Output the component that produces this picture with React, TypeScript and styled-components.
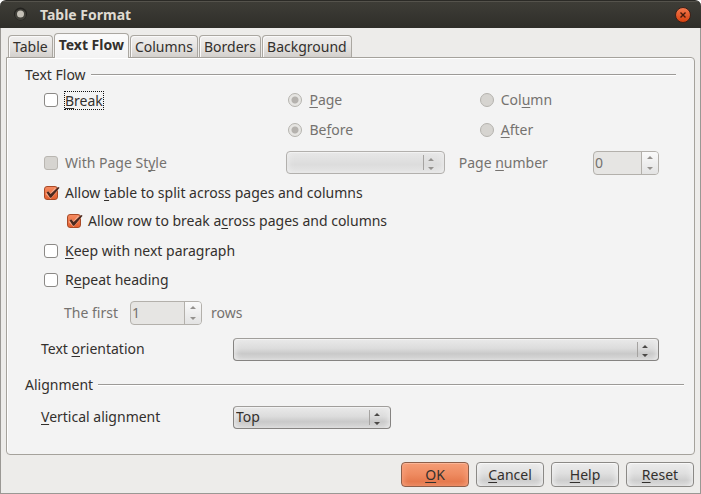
import React, { useState } from "react";
import styled, { createGlobalStyle, css } from "styled-components";

const ink = "#33302d";
const muted = "#75726f";

const GlobalStyle = createGlobalStyle`
  *, *::before, *::after { box-sizing: border-box; }
  body { margin: 0; background: #fff; }
  body, button, input, select {
    font-family: "Noto Sans", "Open Sans", sans-serif;
    font-size: 14px;
    line-height: 20px;
    color: ${ink};
  }
`;

const Window = styled.main`
  display: flex;
  flex-direction: column;
  min-height: 100vh;
`;

const TitleBar = styled.header`
  display: flex;
  align-items: center;
  height: 28px;
  padding: 0 10px 0 13px;
  border-radius: 6px 6px 0 0;
  border-top: 1px solid #2b2a26;
  background: linear-gradient(#55534c 0, #55534c 1px, #3e3d37 1px, #2f2e29 100%);
`;

const Title = styled.h1`
  flex: 1;
  margin: 0 0 0 12px;
  font-size: 14px;
  line-height: 20px;
  font-weight: 700;
  color: #dfdbd2;
`;

const CloseButton = styled.button`
  display: flex;
  padding: 0;
  border: 0;
  background: none;
`;

const Body = styled.div`
  flex: 1;
  display: flex;
  flex-direction: column;
  padding: 5px 5px 6px;
  border: 1px solid #9a9894;
  border-top: 0;
  background: #edecea;
`;

const TabList = styled.div`
  display: flex;
  align-items: flex-end;
  gap: 1px;
  padding-left: 2px;
`;

const Tab = styled.button`
  height: 22px;
  padding: 0 4px;
  border: 1px solid #aaa7a1;
  border-bottom: 0;
  border-radius: 4px 4px 0 0;
  background: linear-gradient(#f0efee, #e6e4e2 50%, #d3d0cc);
  box-shadow: inset 1px 1px 0 #faf9f9;
  white-space: nowrap;

  &[aria-selected="true"] {
    height: 25px;
    margin: 0 0 -1px;
    padding-bottom: 2px;
    background: linear-gradient(#fbfbfb, #f3f3f3);
    font-weight: 700;
    z-index: 1;
  }
`;

const Panel = styled.section`
  flex: 1;
  padding: 7px 18px 20px;
  border: 1px solid #a5a29c;
  border-radius: 0 4px 4px 4px;
  background: #f3f3f3;
  box-shadow: inset 1px 1px 0 #fff;
`;

const Group = styled.fieldset`
  min-width: 0;
  margin: 0;
  padding: 0;
  border: 0;
`;

const GroupTitle = styled.legend<{ $wide?: boolean }>`
  display: flex;
  align-items: center;
  gap: 5px;
  width: 100%;
  height: 20px;
  padding: 0;
  ${(p) => p.$wide && css`
    width: calc(100% + 8px);
    height: 38px;
  `}

  &::after {
    content: "";
    flex: 1;
    height: 2px;
    background: linear-gradient(#9c9a97 50%, #fff 50%);
  }
`;

const Row = styled.div<{ $height: number; $indent?: number }>`
  display: flex;
  align-items: center;
  height: ${(p) => p.$height}px;
  padding: 0 17px 0 ${(p) => p.$indent ?? 19}px;
`;

const ChoiceRow = styled(Row)`
  display: grid;
  grid-template-columns: 244fr 191fr 179fr;
`;

const StyleRow = styled(Row)`
  display: grid;
  grid-template-columns: 242fr 158fr 148fr 66px;
`;

const Choice = styled.label<{ $disabled?: boolean }>`
  display: flex;
  align-items: center;
  gap: 7px;
  white-space: nowrap;
  color: ${(p) => (p.$disabled ? muted : ink)};
`;

const Caption = styled.label<{ $disabled?: boolean }>`
  white-space: nowrap;
  color: ${(p) => (p.$disabled ? muted : ink)};
`;

const FieldCaption = styled(Caption)`
  width: 192px;
`;

const NumberCaption = styled(Caption)`
  padding-left: 14px;
`;

const FirstCaption = styled(Caption)`
  width: 66px;
`;

const LastCaption = styled.span`
  margin-left: 9px;
  color: ${muted};
`;

const Key = styled.u`
  text-decoration-thickness: 1px;
  text-underline-offset: 2px;
  text-decoration-skip-ink: none;
`;

const Focused = styled.span`
  outline: 1px dotted #111;
  line-height: 17px;
`;

const CheckFrame = styled.span`
  display: grid;
  width: 14px;
  height: 14px;

  > * { grid-area: 1 / 1; }
  > svg { overflow: visible; pointer-events: none; }
`;

const CheckInput = styled.input`
  appearance: none;
  width: 14px;
  height: 14px;
  margin: 0;
  border: 1px solid #8b8986;
  border-radius: 3px;
  background: #fff;

  &:checked {
    border-color: #a84a27;
    background: linear-gradient(#f58a60, #e4602f);
  }
  &:disabled {
    border-color: #b9b6b1;
    background: #d6d4d0;
  }
`;

const RadioInput = styled.input`
  appearance: none;
  width: 14px;
  height: 14px;
  margin: 0;
  border: 1px solid #b5b3ae;
  border-radius: 50%;
  background: #d6d4d0;

  &:checked {
    background: radial-gradient(circle, #b5b2ae 0 3px, #e6e5e2 4px);
  }
`;

const SelectFrame = styled.span<{ $fill?: boolean }>`
  position: relative;
  display: flex;
  ${(p) => (p.$fill ? "flex: 1;" : "width: 158px;")}

  > svg {
    position: absolute;
    right: 8px;
    top: 4px;
    pointer-events: none;
  }
`;

const SelectInput = styled.select`
  appearance: none;
  width: 100%;
  height: 23px;
  padding: 0 24px 1px 2px;
  border: 1px solid #858381;
  border-top-color: #a09e9b;
  border-radius: 4px;
  background: linear-gradient(#eaeaea, #dcdcdc 45%, #c9c9c9 70%, #dadada);
  box-shadow: inset 0 1px 0 #f2f2f2, inset 5px 0 6px -4px #eee, inset -5px 0 6px -4px #eee;

  &:disabled {
    opacity: 1;
    border-color: #b2b0ad;
    background: linear-gradient(#e8e8e8, #dcdcdc 60%, #e6e6e6);
  }
`;

const SpinFrame = styled.span<{ $wide?: boolean }>`
  display: flex;
  width: ${(p) => (p.$wide ? 72 : 66)}px;
  height: 24px;
  border: 1px solid #b3b0ab;
  border-radius: 4px;
  background: #e6e5e3;
`;

const SpinInput = styled.input`
  appearance: textfield;
  flex: 1;
  min-width: 0;
  padding: 0 1px;
  border: 0;
  background: none;
  color: ${muted};

  &::-webkit-inner-spin-button { appearance: none; }
`;

const SpinButtons = styled.span`
  display: flex;
  flex-direction: column;
  width: 17px;
  border-left: 1px solid #b3b0ab;
  border-radius: 0 3px 3px 0;
  background: linear-gradient(#fafafa, #e3e3e3);
`;

const SpinButton = styled.button`
  display: flex;
  flex: 1;
  align-items: center;
  justify-content: center;
  padding: 0;
  border: 0;
  background: none;
`;

const Footer = styled.footer`
  display: flex;
  justify-content: flex-end;
  gap: 7px;
  margin-top: 7px;
  padding-right: 1px;
`;

const PushButton = styled.button<{ $primary?: boolean }>`
  width: 68px;
  height: 25px;
  padding: 0;
  border: 1px solid #8b8986;
  border-radius: 4px;
  background: linear-gradient(#ececec, #dfdfdf 45%, #cecece 75%, #dcdcdc);
  box-shadow: inset 0 1px 0 #f8f8f8, inset 5px 0 6px -4px #f4f4f4, inset -5px 0 6px -4px #f4f4f4;
  ${(p) => p.$primary && css`
    border-color: #8d5f4a;
    background: linear-gradient(#f59d76, #ee8a60 50%, #e67a4e 80%, #ea8760);
    box-shadow: inset 0 1px 0 #fbb596, inset 5px 0 6px -4px #f9a582, inset -5px 0 6px -4px #f9a582;
  `}
`;

/** Caption text in which the character after "_" is the underlined shortcut key. */
function Mnemonic({ text }: { text: string }) {
  const at = text.indexOf("_");
  if (at < 0) return <>{text}</>;
  return (
    <span>
      {text.slice(0, at)}
      <Key>{text[at + 1]}</Key>
      {text.slice(at + 2)}
    </span>
  );
}

interface CheckProps {
  text: string;
  initial?: boolean;
  disabled?: boolean;
  focused?: boolean;
}

function Check({ text, initial = false, disabled, focused }: CheckProps) {
  const [on, setOn] = useState(initial);
  const caption = <Mnemonic text={text} />;
  return (
    <Choice $disabled={disabled}>
      <CheckFrame>
        <CheckInput type="checkbox" checked={on} disabled={disabled} onChange={() => setOn(!on)} />
        {on && (
          <svg width="14" height="14" viewBox="0 0 14 14" fill="none" aria-hidden="true">
            <path d="M3 6.5 6.5 10 12.5 3" stroke="#f7a98a" strokeWidth="4" />
            <path d="M2.6 6.4 4.3 5.2 6.6 8 14.2.9 15.6 1.8 7.2 11.8 6 11.8Z" fill="#4b2a20" />
          </svg>
        )}
      </CheckFrame>
      {focused ? <Focused>{caption}</Focused> : caption}
    </Choice>
  );
}

function Radio({ text, name, checked = false }: { text: string; name: string; checked?: boolean }) {
  return (
    <Choice $disabled>
      <RadioInput type="radio" name={name} defaultChecked={checked} disabled />
      <Mnemonic text={text} />
    </Choice>
  );
}

interface SelectProps {
  id: string;
  label?: string;
  options: string[];
  fill?: boolean;
  disabled?: boolean;
}

function Select({ id, label, options, fill, disabled }: SelectProps) {
  const arrow = disabled ? "#94928f" : "#4b4947";
  return (
    <SelectFrame $fill={fill}>
      <SelectInput id={id} aria-label={label} disabled={disabled}>
        {options.map((option) => <option key={option}>{option}</option>)}
      </SelectInput>
      <svg width="14" height="16" viewBox="0 0 14 16" aria-hidden="true">
        <path d="M.5 0V15" stroke="#a5a3a1" />
        <path d="M5 6 8 3 11 6ZM5 12 8 15 11 12Z" fill={arrow} />
      </svg>
    </SelectFrame>
  );
}

function Spin({ id, value, wide }: { id: string; value: number; wide?: boolean }) {
  return (
    <SpinFrame $wide={wide}>
      <SpinInput id={id} type="number" defaultValue={value} disabled />
      <SpinButtons>
        <SpinButton type="button" aria-label="Increase" disabled>
          <svg width="6" height="3" viewBox="0 0 6 3"><path d="M0 3 3 0 6 3Z" fill="#94918e" /></svg>
        </SpinButton>
        <SpinButton type="button" aria-label="Decrease" disabled>
          <svg width="6" height="3" viewBox="0 0 6 3"><path d="M0 0 3 3 6 0Z" fill="#94918e" /></svg>
        </SpinButton>
      </SpinButtons>
    </SpinFrame>
  );
}

const tabs = ["Table", "Text Flow", "Columns", "Borders", "Background"];

export default function App() {
  const [active, setActive] = useState("Text Flow");
  return (
    <>
      <GlobalStyle />
      <Window>
        <TitleBar>
          <svg width="15" height="15" viewBox="0 0 15 15" aria-hidden="true">
            <circle cx="7.5" cy="7" r="6.5" fill="#23221f" />
            <circle cx="7.5" cy="7.5" r="5.5" fill="#42413b" />
            <circle cx="7.5" cy="7" r="3.5" fill="#c4c0b7" />
          </svg>
          <Title>Table Format</Title>
          <CloseButton type="button" aria-label="Close">
            <svg width="16" height="16" viewBox="0 0 16 16">
              <defs>
                <linearGradient id="close" x2="0" y2="1">
                  <stop stopColor="#f47a50" />
                  <stop offset="1" stopColor="#d63f0c" />
                </linearGradient>
              </defs>
              <circle cx="8" cy="8" r="7.5" fill="url(#close)" stroke="#3a2018" />
              <path d="M5.5 5.5 10.5 10.5M10.5 5.5 5.5 10.5" stroke="#43190b" strokeWidth="1.4" />
            </svg>
          </CloseButton>
        </TitleBar>
        <Body>
          <TabList role="tablist">
            {tabs.map((tab) => (
              <Tab key={tab} type="button" role="tab" aria-selected={tab === active} onClick={() => setActive(tab)}>
                {tab}
              </Tab>
            ))}
          </TabList>
          <Panel role="tabpanel" aria-label={active}>
            <Group>
              <GroupTitle>Text Flow</GroupTitle>
              <ChoiceRow $height={30}>
                <Check text="_Break" focused />
                <Radio name="break-type" text="_Page" checked />
                <Radio name="break-type" text="Col_umn" />
              </ChoiceRow>
              <ChoiceRow $height={30}>
                <span />
                <Radio name="break-place" text="Be_fore" checked />
                <Radio name="break-place" text="_After" />
              </ChoiceRow>
              <StyleRow $height={35}>
                <Check text="With Page St_yle" disabled />
                <Select id="page-style" label="Page style" options={[""]} fill disabled />
                <NumberCaption htmlFor="page-number" $disabled>
                  <Mnemonic text="Page _number" />
                </NumberCaption>
                <Spin id="page-number" value={0} />
              </StyleRow>
              <Row $height={26}>
                <Check text="Allow _table to split across pages and columns" initial />
              </Row>
              <Row $height={30} $indent={42}>
                <Check text="Allow row to break a_cross pages and columns" initial />
              </Row>
              <Row $height={30}>
                <Check text="_Keep with next paragraph" />
              </Row>
              <Row $height={28}>
                <Check text="R_epeat heading" />
              </Row>
              <Row $height={38} $indent={39}>
                <FirstCaption htmlFor="heading-rows" $disabled>
                  <Mnemonic text="The f_irst" />
                </FirstCaption>
                <Spin id="heading-rows" value={1} wide />
                <LastCaption>rows</LastCaption>
              </Row>
              <Row $height={34} $indent={16}>
                <FieldCaption htmlFor="orientation">
                  <Mnemonic text="Text _orientation" />
                </FieldCaption>
                <Select id="orientation" options={[""]} fill />
              </Row>
            </Group>
            <Group>
              <GroupTitle $wide>Alignment</GroupTitle>
              <Row $height={26} $indent={16}>
                <FieldCaption htmlFor="vertical">
                  <Mnemonic text="_Vertical alignment" />
                </FieldCaption>
                <Select id="vertical" options={["Top"]} />
              </Row>
            </Group>
          </Panel>
          <Footer>
            <PushButton type="button" $primary><Mnemonic text="_OK" /></PushButton>
            <PushButton type="button"><Mnemonic text="_Cancel" /></PushButton>
            <PushButton type="button"><Mnemonic text="_Help" /></PushButton>
            <PushButton type="button"><Mnemonic text="_Reset" /></PushButton>
          </Footer>
        </Body>
      </Window>
    </>
  );
}
